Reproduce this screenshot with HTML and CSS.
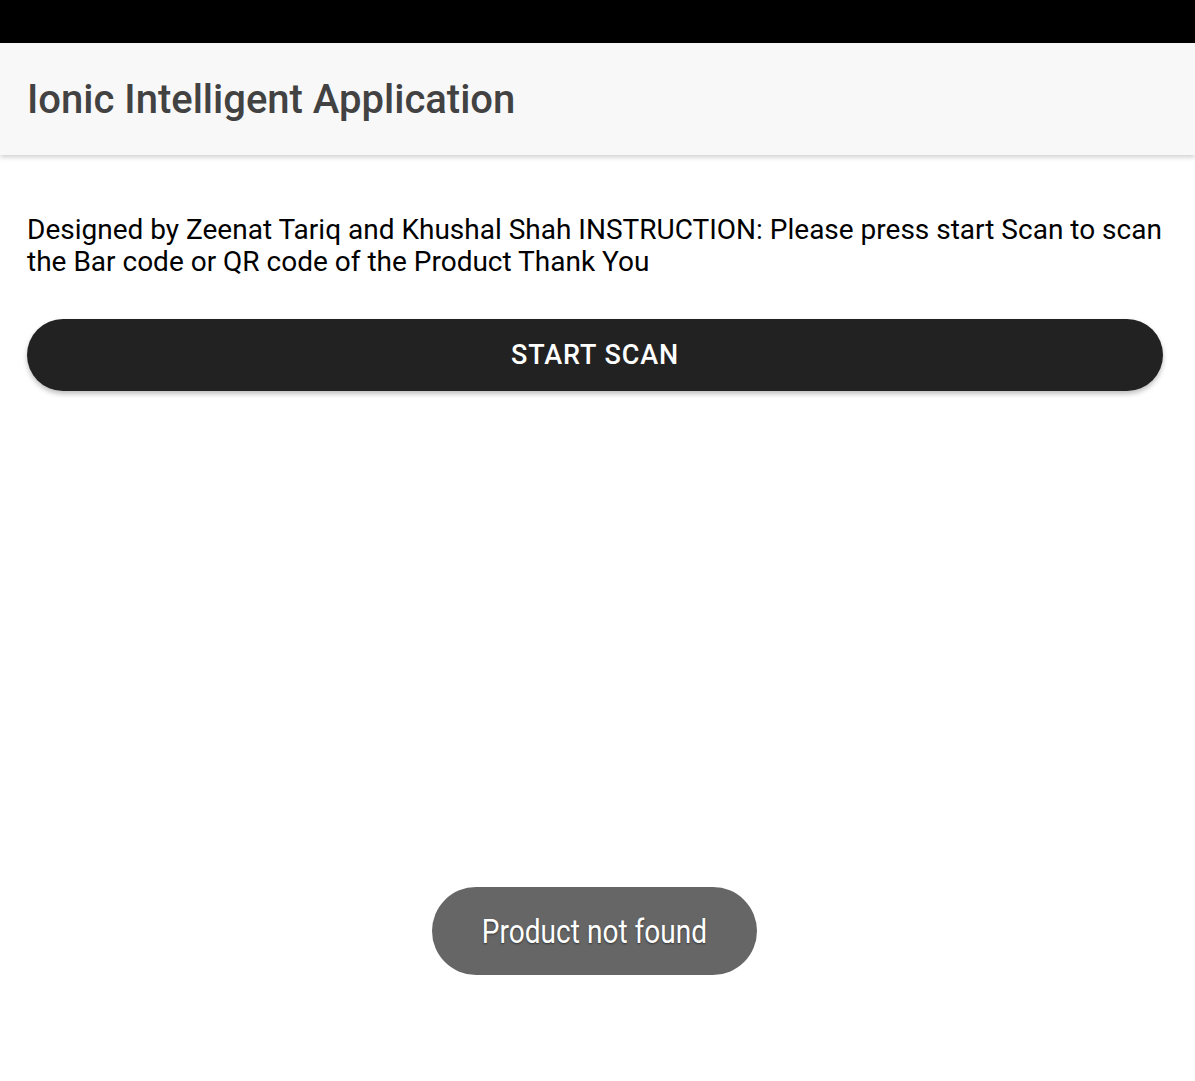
FILE: index.html
```html
<!DOCTYPE html>
<html>
<head>
<meta charset="utf-8">
<link rel="stylesheet" href="styles.css">
</head>
<body>
<div class="statusbar"></div>
<header class="toolbar">
  <h1 class="title">Ionic Intelligent Application</h1>
</header>
<main class="content">
  <p class="intro">Designed by Zeenat Tariq and Khushal Shah INSTRUCTION: Please press start Scan to scan the Bar code or QR code of the Product Thank You</p>
  <button class="scan-btn">START SCAN</button>
</main>
<div class="toast"><span class="toast-text">Product not found</span></div>
</body>
</html>
```
FILE: styles.css
```css
html, body {
  margin: 0;
  padding: 0;
  background: #fff;
  font-family: Roboto, "Noto Sans", sans-serif;
}
body {
  width: 1195px;
  height: 1081px;
  overflow: hidden;
  position: relative;
}
.statusbar {
  height: 43px;
  background: #000;
}
.toolbar {
  height: 112px;
  background: #f8f8f8;
  box-shadow: 0 2px 5px rgba(0,0,0,0.2);
  display: flex;
  align-items: center;
  padding: 0 27px;
  position: relative;
  z-index: 1;
}
.title {
  margin: 0;
  font-size: 40px;
  font-weight: 500;
  color: #424242;
}
.content {
  padding: 59px 32px 0 27px;
}
.intro {
  margin: 0;
  font-size: 28px;
  line-height: 32px;
  color: #000;
}
.scan-btn {
  margin-top: 41px;
  width: 1136px;
  height: 72px;
  border: none;
  border-radius: 36px;
  background: #222;
  color: #fff;
  font-family: Roboto, sans-serif;
  font-weight: 500;
  font-size: 27px;
  letter-spacing: 0.9px;
  box-shadow: 0 3px 5px rgba(0,0,0,0.25);
  display: block;
}
.toast {
  position: absolute;
  left: 432px;
  top: 887px;
  width: 325px;
  height: 88px;
  border-radius: 44px;
  background: #666;
  display: flex;
  align-items: center;
  justify-content: center;
}
.toast-text {
  color: #fff;
  font-size: 33px;
  display: inline-block;
  transform: scaleX(0.85);
  text-shadow: 0 1px 2px rgba(0,0,0,0.5);
  white-space: nowrap;
}
```
